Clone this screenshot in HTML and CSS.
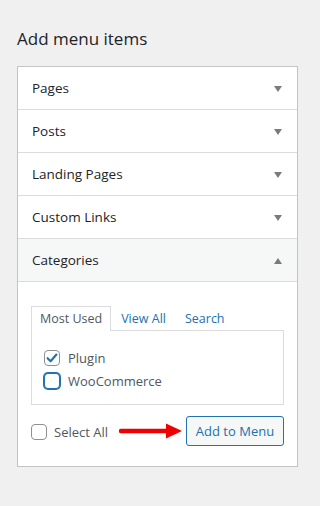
FILE: index.html
```html
<!DOCTYPE html>
<html>
<head>
<meta charset="utf-8">
<link rel="stylesheet" href="styles.css">
</head>
<body>
<div class="page">
  <h2 class="title">Add menu items</h2>
  <div class="box">
    <div class="row"><span>Pages</span><span class="tri down"></span></div>
    <div class="row"><span>Posts</span><span class="tri down"></span></div>
    <div class="row"><span>Landing Pages</span><span class="tri down"></span></div>
    <div class="row"><span>Custom Links</span><span class="tri down"></span></div>
    <div class="row open"><span>Categories</span><span class="tri up"></span></div>
    <div class="content">
      <div class="tabs">
        <span class="tab active">Most Used</span>
        <span class="tab">View All</span>
        <span class="tab">Search</span>
      </div>
      <div class="panel">
        <div class="item">
          <span class="cb checked"><svg width="14" height="14" viewBox="0 0 14 14"><path d="M2.6 7.2 L5.6 10.2 L11.4 3.6" fill="none" stroke="#2271b1" stroke-width="2.2" stroke-linecap="round" stroke-linejoin="round"/></svg></span>
          <span class="lbl">Plugin</span>
        </div>
        <div class="item">
          <span class="cb focus"></span>
          <span class="lbl">WooCommerce</span>
        </div>
      </div>
      <div class="actions">
        <span class="cb"></span>
        <span class="lbl select">Select All</span>
        <svg class="arrow" width="64" height="18" viewBox="0 0 64 18"><line x1="2" y1="9" x2="50" y2="9" stroke="#f00000" stroke-width="4.5" stroke-linecap="round"/><polygon points="47,1.5 63,9 47,16.5" fill="#f00000"/></svg>
        <span class="btn">Add to Menu</span>
      </div>
    </div>
  </div>
</div>
</body>
</html>
```

FILE: styles.css
```css
html, body {
  margin: 0;
  padding: 0;
  background: #f0f0f1;
}
body {
  font-family: "Open Sans", "Noto Sans", sans-serif;
  color: #1d2327;
}
.page {
  padding: 27px 0 0 17px;
}
.title {
  margin: 0 0 15px;
  font-size: 17px;
  font-weight: 400;
  line-height: 24px;
  height: 24px;
  color: #1d2327;
}
.box {
  width: 281px;
  box-sizing: border-box;
  background: #fff;
  border: 1px solid #c3c4c7;
  box-shadow: 0 1px 1px rgba(0,0,0,.04);
}
.row {
  height: 42px;
  border-bottom: 1px solid #dcdcde;
  display: flex;
  align-items: center;
  justify-content: space-between;
  padding: 0 15px 0 14px;
  font-size: 13.5px;
  color: #1d2327;
}
.row.open {
  background: #f6f7f7;
}
.tri {
  width: 0;
  height: 0;
  border-left: 4.5px solid transparent;
  border-right: 4.5px solid transparent;
  margin-top: 1px;
}
.tri.down {
  border-top: 6px solid #787c82;
}
.tri.up {
  border-bottom: 6px solid #787c82;
}
.content {
  padding: 24px 13px 20px;
}
.tabs {
  display: flex;
  height: 25px;
  font-size: 12.5px;
  line-height: 24px;
  position: relative;
  z-index: 1;
}
.tab {
  padding: 0 8px;
  border: 1px solid transparent;
  border-bottom: none;
  color: #2271b1;
  margin-right: 1px;
}
.tab.active {
  background: #fff;
  border-color: #dcdcde;
  color: #50575e;
  height: 25px;
  box-sizing: border-box;
}
.panel {
  border: 1px solid #dcdcde;
  margin-top: -1px;
  height: 75px;
  box-sizing: border-box;
  padding: 15px 12px 0;
}
.item {
  display: flex;
  align-items: center;
  height: 23px;
  font-size: 13px;
  color: #50575e;
}
.cb {
  width: 16px;
  height: 16px;
  box-sizing: border-box;
  border: 1px solid #8c8f94;
  border-radius: 4px;
  background: #fff;
  display: inline-flex;
  align-items: center;
  justify-content: center;
  flex: none;
}
.cb.focus {
  border-color: #2271b1;
  box-shadow: 0 0 0 1px #2271b1;
}
.lbl {
  margin-left: 8px;
  color: #50575e;
}
.actions {
  display: flex;
  align-items: center;
  margin-top: 11px;
  height: 30px;
  font-size: 13px;
}
.actions .cb {
  margin-top: 2px;
}
.select {
  margin-left: 7px;
  margin-top: 2px;
}
.arrow {
  margin-left: auto;
  margin-right: 3px;
  flex: none;
}
.btn {
  width: 98px;
  height: 30px;
  box-sizing: border-box;
  border: 1px solid #2271b1;
  border-radius: 3px;
  background: #f6f7f7;
  color: #2271b1;
  display: flex;
  align-items: center;
  justify-content: center;
  font-size: 13px;
}
```
